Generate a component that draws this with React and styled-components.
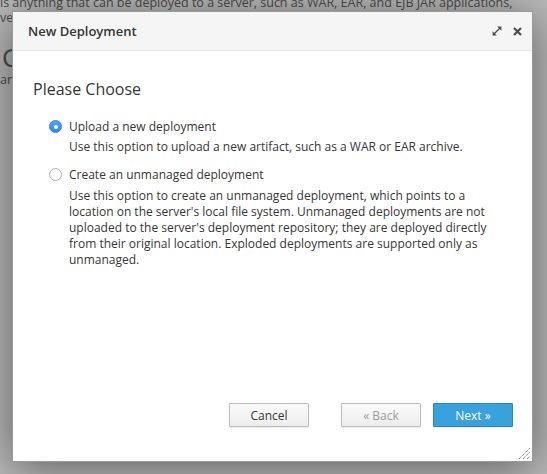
import React from 'react';
import styled, { createGlobalStyle } from 'styled-components';

const Global = createGlobalStyle`
  html, body { margin: 0; padding: 0; }
  body {
    width: 547px;
    height: 474px;
    overflow: hidden;
    background: #fff;
    font-family: "Open Sans", "Liberation Sans", sans-serif;
  }
`;

const Page = styled.div`
  position: relative;
  width: 547px;
  height: 474px;
  overflow: hidden;
  color: #6a6a6a;
`;

const PageText = styled.p`
  margin: 0;
  font-size: 12.5px;
  line-height: 15px;
  white-space: nowrap;
  margin-top: ${p => p.top || 0}px;
`;

const PageHeading = styled.h2`
  margin: 17px 0 0 2px;
  font-size: 26px;
  font-weight: 400;
  line-height: 30px;
`;

const Backdrop = styled.div`
  position: absolute;
  inset: 0;
  background: rgba(0, 0, 0, 0.27);
`;

const Dialog = styled.div`
  position: absolute;
  left: 12px;
  top: 11px;
  width: 519px;
  height: 449px;
  background: #fff;
  border: 1px solid rgba(0, 0, 0, 0.4);
  box-shadow: 0 6px 45px rgba(0, 0, 0, 0.5);
  display: flex;
  flex-direction: column;
`;

const Header = styled.div`
  height: 38px;
  background: #f5f5f5;
  border-bottom: 1px solid #e6e6e6;
  display: flex;
  align-items: center;
  padding: 0 10px 0 15px;
`;

const Title = styled.h4`
  margin: 0;
  flex: 1;
  font-size: 13px;
  font-weight: 600;
  color: #363636;
`;

const Tools = styled.div`
  display: flex;
  align-items: center;
  gap: 11px;
  color: #4d4d4d;
`;

const Body = styled.div`
  flex: 1;
  padding: 27px 20px 0 20px;
`;

const Heading = styled.h3`
  margin: 0 0 19px;
  font-size: 16px;
  font-weight: 400;
  line-height: 22px;
  color: #363636;
`;

const Options = styled.div`
  margin-left: 17px;
  display: flex;
  flex-direction: column;
  gap: 12px;
`;

const Option = styled.label`
  display: grid;
  grid-template-columns: 12px 1fr;
  column-gap: 7px;
  font-size: 12px;
  line-height: 16px;
  color: #363636;
`;

const Radio = styled.span`
  width: 13px;
  height: 13px;
  margin: 1px 0 0 -1px;
  box-sizing: border-box;
  border-radius: 50%;
  display: flex;
  align-items: center;
  justify-content: center;
  background: ${p => (p.checked ? 'linear-gradient(#52a8f7, #2f86ea)' : '#fff')};
  border: 1px solid ${p => (p.checked ? '#2d80df' : '#b3b3b3')};
  &::after {
    content: '';
    display: ${p => (p.checked ? 'block' : 'none')};
    width: 4px;
    height: 4px;
    border-radius: 50%;
    background: #fff;
  }
`;

const Desc = styled.div`
  grid-column: 2;
  margin-top: ${p => p.gap}px;
  padding-right: 20px;
`;

const Footer = styled.div`
  display: flex;
  justify-content: flex-end;
  padding: 0 19px 34px 0;
`;

const Button = styled.button`
  width: 80px;
  height: 24px;
  margin-left: ${p => p.gap}px;
  font-family: "Open Sans", "Liberation Sans", sans-serif;
  font-size: 12px;
  padding: 0;
  border-radius: 1px;
  cursor: pointer;
  color: ${p => (p.primary ? '#fff' : p.disabled ? '#9c9c9c' : '#363636')};
  background: ${p => (p.primary ? '#39a1dc' : 'linear-gradient(#fafafa, #ededed)')};
  border: 1px solid ${p => (p.primary ? '#2b84bf' : '#bbb')};
  box-shadow: 0 1px 1px rgba(0, 0, 0, 0.08);
`;

const Grip = styled.svg`
  position: absolute;
  right: 1px;
  bottom: 1px;
`;

export default function App() {
  return (
    <Page>
      <Global />
      <PageText top={-5}>is anything that can be deployed to a server, such as WAR, EAR, and EJB JAR applications,</PageText>
      <PageText>ve versions of the content to the content repository and then deploy it to servers.</PageText>
      <PageHeading>Content Repository</PageHeading>
      <PageText top={0}>an</PageText>
      <Backdrop />
      <Dialog>
        <Header>
          <Title>New Deployment</Title>
          <Tools>
            <svg width="10" height="10" viewBox="0 0 10 10">
              <path d="M1.2 8.8 L8.8 1.2" stroke="currentColor" strokeWidth="1.3" />
              <path d="M5.2 0.6 H9.4 V4.8 Z" fill="currentColor" />
              <path d="M0.6 5.2 V9.4 H4.8 Z" fill="currentColor" />
            </svg>
            <svg width="9" height="9" viewBox="0 0 9 9">
              <path d="M1 1 L8 8 M8 1 L1 8" stroke="currentColor" strokeWidth="2.2" />
            </svg>
          </Tools>
        </Header>
        <Body>
          <Heading>Please Choose</Heading>
          <Options>
            <Option>
              <Radio checked />
              <span>Upload a new deployment</span>
              <Desc gap={4}>Use this option to upload a new artifact, such as a WAR or EAR archive.</Desc>
            </Option>
            <Option>
              <Radio />
              <span>Create an unmanaged deployment</span>
              <Desc gap={5}>
                Use this option to create an unmanaged deployment, which points to a location on the
                server's local file system. Unmanaged deployments are not uploaded to the server's
                deployment repository; they are deployed directly from their original location.
                Exploded deployments are supported only as unmanaged.
              </Desc>
            </Option>
          </Options>
        </Body>
        <Footer>
          <Button>Cancel</Button>
          <Button gap={32} disabled>« Back</Button>
          <Button gap={12} primary>Next »</Button>
        </Footer>
        <Grip width="13" height="13" viewBox="0 0 13 13">
          <path d="M1 12 L12 1 M5 12 L12 5 M9 12 L12 9" stroke="#555" strokeWidth="1" strokeDasharray="1 1" />
        </Grip>
      </Dialog>
    </Page>
  );
}
